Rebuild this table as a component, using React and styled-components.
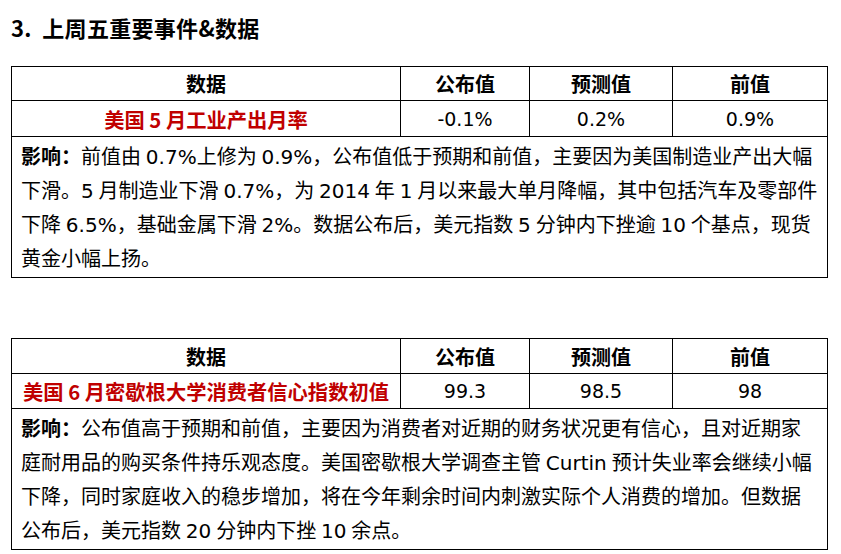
import React from 'react';
import styled, {createGlobalStyle} from 'styled-components';

const GlobalStyle = createGlobalStyle`
    body {
        margin: 0;
        background: #ffffff;
        font-family: "Noto Sans CJK SC", "Noto Sans", sans-serif;
        color: #000000;
    }
`;

const events = [
    {
        name: '美国 5 月工业产出月率',
        actual: '-0.1%',
        forecast: '0.2%',
        previous: '0.9%',
        head: 34,
        row: 36,
        lines: [
            '前值由 0.7%上修为 0.9%，公布值低于预期和前值，主要因为美国制造业产出大幅',
            '下滑。5 月制造业下滑 0.7%，为 2014 年 1 月以来最大单月降幅，其中包括汽车及零部件',
            '下降 6.5%，基础金属下滑 2%。数据公布后，美元指数 5 分钟内下挫逾 10 个基点，现货',
            '黄金小幅上扬。',
        ],
    },
    {
        name: '美国 6 月密歇根大学消费者信心指数初值',
        actual: '99.3',
        forecast: '98.5',
        previous: '98',
        head: 35,
        row: 35,
        lines: [
            '公布值高于预期和前值，主要因为消费者对近期的财务状况更有信心，且对近期家',
            '庭耐用品的购买条件持乐观态度。美国密歇根大学调查主管 Curtin 预计失业率会继续小幅',
            '下降，同时家庭收入的稳步增加，将在今年剩余时间内刺激实际个人消费的增加。但数据',
            '公布后，美元指数 20 分钟内下挫 10 余点。',
        ],
    },
];

const EventTable = ({event, first}) => (
    <Table $first={first}>
        <colgroup>
            <col style={{width: 389}} />
            <col style={{width: 129}} />
            <col style={{width: 143}} />
            <col style={{width: 155}} />
        </colgroup>
        <tbody>
            <Row $h={event.head}>
                <HeadCell>数据</HeadCell>
                <HeadCell>公布值</HeadCell>
                <HeadCell>预测值</HeadCell>
                <HeadCell>前值</HeadCell>
            </Row>
            <Row $h={event.row}>
                <NameCell>{event.name}</NameCell>
                <ValueCell>{event.actual}</ValueCell>
                <ValueCell>{event.forecast}</ValueCell>
                <ValueCell>{event.previous}</ValueCell>
            </Row>
            <tr>
                <NoteCell colSpan={4}>
                    {event.lines.map((line, i) => (
                        <NoteLine key={i}>
                            {i === 0 && <Label>影响：</Label>}
                            {line}
                        </NoteLine>
                    ))}
                </NoteCell>
            </tr>
        </tbody>
    </Table>
);

const App = () => (
    <Page>
        <GlobalStyle />
        <Title>3.&nbsp;&nbsp;上周五重要事件&amp;数据</Title>
        {events.map((event, i) => (
            <EventTable key={i} event={event} first={i === 0} />
        ))}
    </Page>
);

export default App;

const Page = styled.div`
    width: 841px;
    height: 554px;
    padding: 0 0 0 11px;
    box-sizing: border-box;
    overflow: hidden;
`;

const Title = styled.h1`
    margin: 0;
    height: 54px;
    font-size: 22px;
    font-weight: 700;
    line-height: 54px;
    letter-spacing: 0.3px;
`;

const Table = styled.table`
    width: 816px;
    border-collapse: collapse;
    table-layout: fixed;
    margin-top: ${(p) => (p.$first ? '12px' : '60px')};
    td {
        border: 1px solid #000;
        padding: 0;
    }
`;

const Row = styled.tr`
    height: ${(p) => p.$h}px;
`;

const HeadCell = styled.td`
    text-align: center;
    font-size: 20px;
    font-weight: 700;
`;

const NameCell = styled.td`
    text-align: center;
    font-size: 20.3px;
    font-weight: 700;
    color: #c00000;
    white-space: nowrap;
`;

const ValueCell = styled.td`
    text-align: center;
    font-family: "DejaVu Sans", "Noto Sans CJK SC", sans-serif;
    font-size: 19px;
`;

const NoteCell = styled.td`
    && {
        padding: 2px 0 1px 9px;
    }
    font-family: "DejaVu Sans", "Noto Sans CJK SC", sans-serif;
    font-size: 20px;
    line-height: 34px;
    word-spacing: -1.5px;
`;

const NoteLine = styled.div`
    white-space: nowrap;
`;

const Label = styled.span`
    font-family: "Noto Sans CJK SC", sans-serif;
    font-weight: 700;
`;
